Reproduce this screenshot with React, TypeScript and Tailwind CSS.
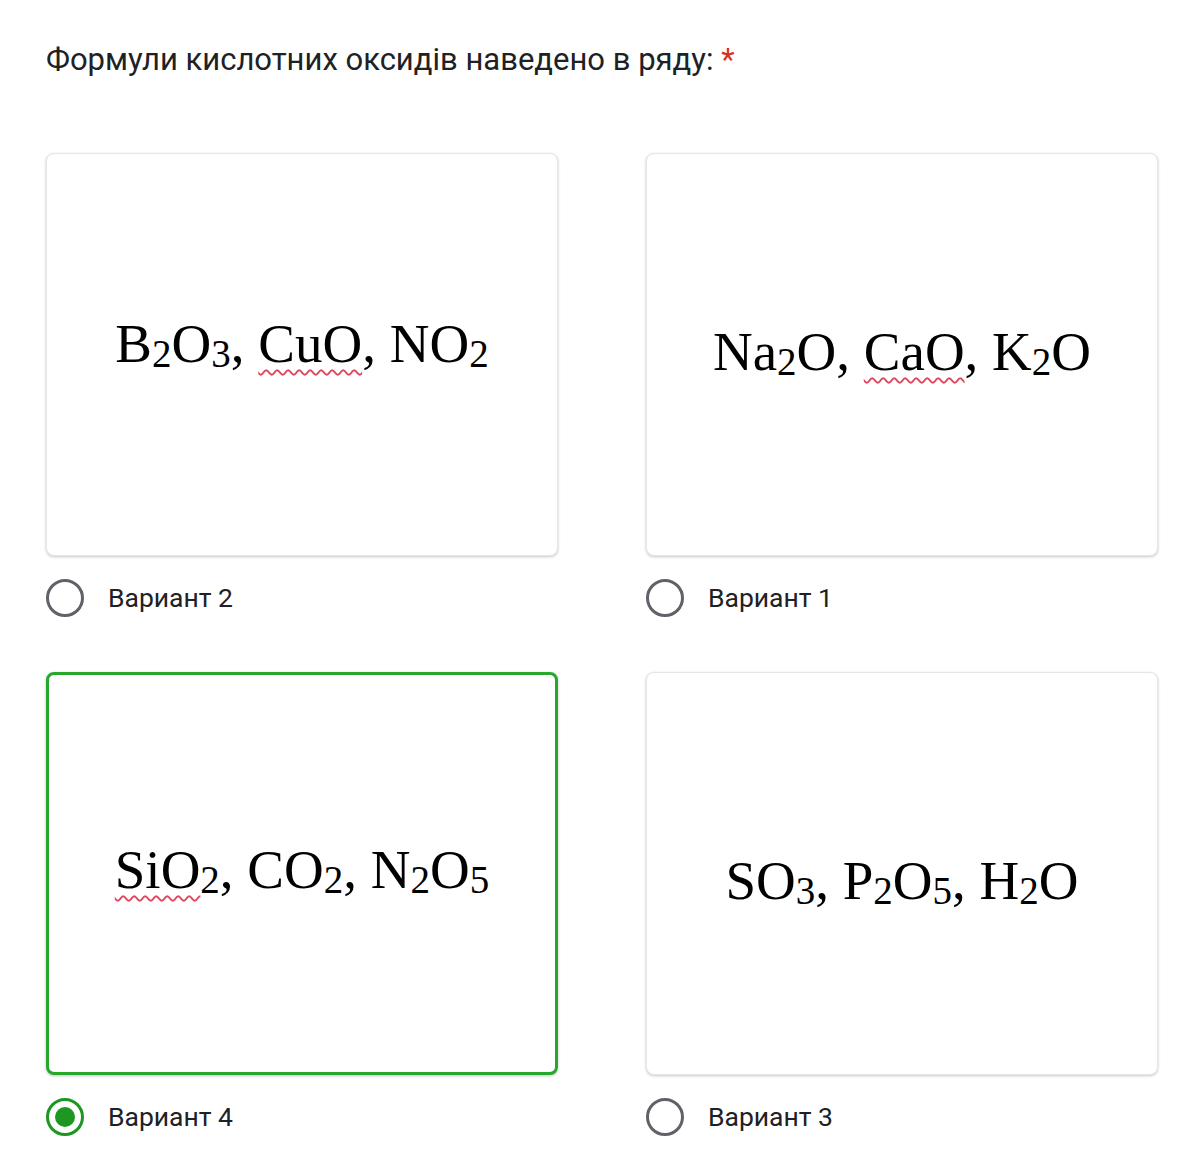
import React from "react";

type Part = { t: string; sub?: boolean; wavy?: boolean };

const serif = { fontFamily: '"Liberation Serif", "Times New Roman", serif' };
const sans = { fontFamily: 'Roboto, "Noto Sans", sans-serif' };

function Formula({ parts }: { parts: Part[][] }) {
  return (
    <div className="text-[55px] leading-none text-black whitespace-nowrap" style={serif}>
      {parts.map((group, gi) => (
        <React.Fragment key={gi}>
          {gi > 0 && <span style={serif}>, </span>}
          {group.map((p, i) =>
            p.sub ? (
              <span key={i} className="text-[39px] relative top-[5px]" style={serif}>
                {p.t}
              </span>
            ) : p.wavy ? (
              <span
                key={i}
                style={serif}
                className="underline decoration-wavy decoration-[#e0475f] decoration-[1.5px] underline-offset-[7px]"
              >
                {p.t}
              </span>
            ) : (
              <span key={i} style={serif}>
                {p.t}
              </span>
            )
          )}
        </React.Fragment>
      ))}
    </div>
  );
}

function Card({
  parts,
  selected,
  offset,
}: {
  parts: Part[][];
  selected?: boolean;
  offset: string;
}) {
  return (
    <div
      className={
        "h-[403px] rounded-[8px] bg-white flex items-center justify-center " +
        (selected
          ? "border-[3px] border-[#27a82c] shadow-[0_1px_3px_rgba(0,0,0,0.25)]"
          : "border border-[#e6e6e6] shadow-[0_1px_3px_rgba(0,0,0,0.22)]")
      }
    >
      <div className={offset}>
        <Formula parts={parts} />
      </div>
    </div>
  );
}

function Radio({ label, checked }: { label: string; checked?: boolean }) {
  return (
    <div className="flex items-center h-[38px] mt-[23px]">
      {checked ? (
        <div className="w-[38px] h-[38px] rounded-full border-[3px] border-[#1e9622] flex items-center justify-center">
          <div className="w-[20px] h-[20px] rounded-full bg-[#1e9622]" />
        </div>
      ) : (
        <div className="w-[38px] h-[38px] rounded-full border-[3px] border-[#5f6368]" />
      )}
      <span className="ml-[24px] text-[26.5px] text-[#202124]" style={sans}>
        {label}
      </span>
    </div>
  );
}

export default function App() {
  return (
    <div className="w-[1200px] h-[1156px] bg-white px-[46px] pt-[40px]">
      <div className="text-[31px] leading-[40px] text-[#202124]" style={sans}>
        Формули кислотних оксидів наведено в ряду:{" "}
        <span className="text-[#d93025]">*</span>
      </div>
      <div className="grid grid-cols-[512px_512px] gap-x-[88px] mt-[73px]">
        <div>
          <Card
            offset="-mt-[22px]"
            parts={[
              [{ t: "B" }, { t: "2", sub: true }, { t: "O" }, { t: "3", sub: true }],
              [{ t: "CuO", wavy: true }],
              [{ t: "NO" }, { t: "2", sub: true }],
            ]}
          />
          <Radio label="Вариант 2" />
        </div>
        <div>
          <Card
            offset="-mt-[6px]"
            parts={[
              [{ t: "Na" }, { t: "2", sub: true }, { t: "O" }],
              [{ t: "CaO", wavy: true }],
              [{ t: "K" }, { t: "2", sub: true }, { t: "O" }],
            ]}
          />
          <Radio label="Вариант 1" />
        </div>
        <div className="mt-[55px]">
          <Card
            selected
            offset="-mt-[8px]"
            parts={[
              [{ t: "SiO", wavy: true }, { t: "2", sub: true }],
              [{ t: "CO" }, { t: "2", sub: true }],
              [{ t: "N" }, { t: "2", sub: true }, { t: "O" }, { t: "5", sub: true }],
            ]}
          />
          <Radio label="Вариант 4" checked />
        </div>
        <div className="mt-[55px]">
          <Card
            offset="mt-[14px]"
            parts={[
              [{ t: "SO" }, { t: "3", sub: true }],
              [{ t: "P" }, { t: "2", sub: true }, { t: "O" }, { t: "5", sub: true }],
              [{ t: "H" }, { t: "2", sub: true }, { t: "O" }],
            ]}
          />
          <Radio label="Вариант 3" />
        </div>
      </div>
    </div>
  );
}
